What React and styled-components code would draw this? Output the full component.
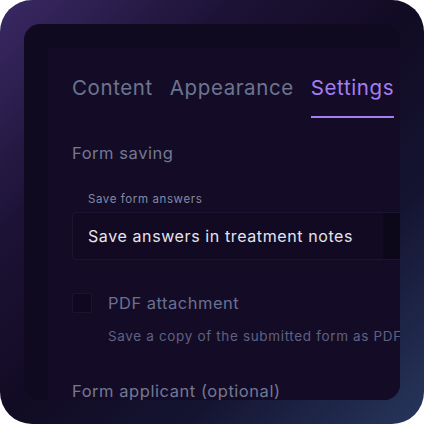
import React from 'react'
import styled, { createGlobalStyle } from 'styled-components'

const GlobalStyle = createGlobalStyle`
    body {
        margin: 0;
        background: #ffffff;
        font-family: "Inter", "Liberation Sans", sans-serif;
    }
`

const Frame = styled.div`
    width: 424px;
    height: 424px;
    box-sizing: border-box;
    padding: 24px;
    border-radius: 32px;
    overflow: hidden;
    background: linear-gradient(135deg, #3a2964 0%, #1c1235 28%, #120b24 50%, #141431 72%, #27365c 100%);
`

const Panel = styled.div`
    width: 100%;
    height: 100%;
    box-sizing: border-box;
    padding: 24px 0 0 24px;
    border-radius: 16px;
    overflow: hidden;
    background: #100a21;
`

const Content = styled.div`
    height: 100%;
    box-sizing: border-box;
    padding: 26px 0 0 24px;
    background: #140c27;
    white-space: nowrap;
`

const Tabs = styled.div`
    display: flex;
    gap: 17px;
`

const Tab = styled.div`
    font-size: 20.5px;
    line-height: 28px;
    letter-spacing: 0.6px;
    padding-bottom: 14px;
    color: ${p => (p.active ? '#a57ef2' : '#6c7490')};
    border-bottom: 2px solid ${p => (p.active ? '#a57ef2' : 'transparent')};
`

const SectionTitle = styled.div`
    font-size: 16.5px;
    line-height: 22px;
    letter-spacing: 0.55px;
    color: #737893;
    margin-top: ${p => p.top || 0}px;
`

const FieldLabel = styled.div`
    font-size: 11.5px;
    line-height: 16px;
    letter-spacing: 0.6px;
    color: #838aa6;
    margin: 27px 0 5px 16px;
`

const Select = styled.div`
    display: flex;
    width: 340px;
    height: 48px;
    box-sizing: border-box;
    border: 1px solid #1c1532;
    border-radius: 4px;
    background: #110a22;
    overflow: hidden;
`

const SelectValue = styled.div`
    flex: 1;
    padding-left: 15px;
    font-size: 16px;
    line-height: 46px;
    letter-spacing: 0.6px;
    color: #e4e4ee;
`

const SelectArrow = styled.div`
    width: 28px;
    background: #0c0719;
`

const CheckRow = styled.div`
    display: flex;
    align-items: center;
    gap: 16px;
    margin-top: 32px;
`

const Checkbox = styled.div`
    width: 20px;
    height: 20px;
    box-sizing: border-box;
    border: 1px solid #1b1430;
    border-radius: 2px;
    background: #0e0820;
`

const CheckLabel = styled.div`
    font-size: 16.5px;
    line-height: 22px;
    letter-spacing: 0.5px;
    color: #6a7090;
`

const CheckHint = styled.div`
    font-size: 13.5px;
    line-height: 20px;
    letter-spacing: 0.65px;
    color: #5d6282;
    margin: 12px 0 0 36px;
`

export default function App() {
    return (
        <Frame>
            <GlobalStyle />
            <Panel>
                <Content>
                    <Tabs>
                        <Tab>Content</Tab>
                        <Tab>Appearance</Tab>
                        <Tab active>Settings</Tab>
                    </Tabs>
                    <SectionTitle top={24}>Form saving</SectionTitle>
                    <FieldLabel>Save form answers</FieldLabel>
                    <Select>
                        <SelectValue>Save answers in treatment notes</SelectValue>
                        <SelectArrow />
                    </Select>
                    <CheckRow>
                        <Checkbox />
                        <CheckLabel>PDF attachment</CheckLabel>
                    </CheckRow>
                    <CheckHint>Save a copy of the submitted form as PDF</CheckHint>
                    <SectionTitle top={34}>Form applicant (optional)</SectionTitle>
                </Content>
            </Panel>
        </Frame>
    )
}
